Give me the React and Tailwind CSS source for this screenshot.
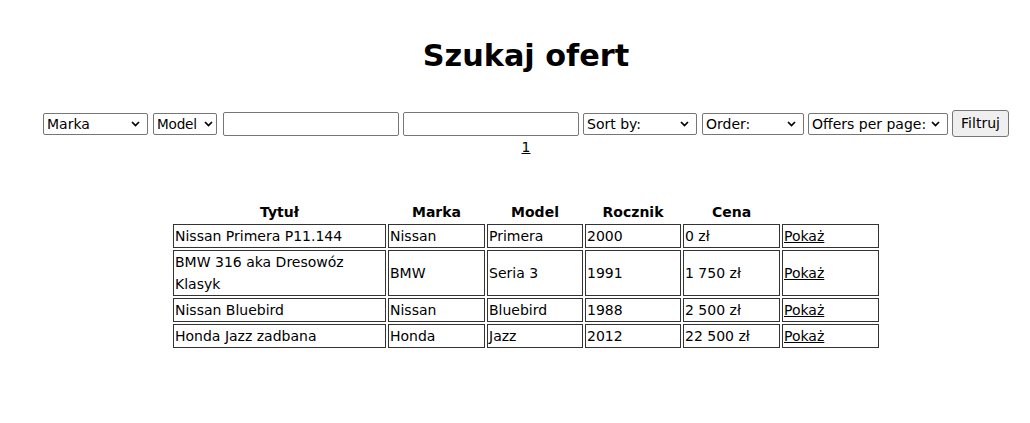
export default function App() {
  const rows = [
    ["Nissan Primera P11.144", "Nissan", "Primera", "2000", "0 zł"],
    ["BMW 316 aka Dresowóz Klasyk", "BMW", "Seria 3", "1991", "1 750 zł"],
    ["Nissan Bluebird", "Nissan", "Bluebird", "1988", "2 500 zł"],
    ["Honda Jazz zadbana", "Honda", "Jazz", "2012", "22 500 zł"],
  ];
  const sel = "h-[22px] border border-[#767676] rounded-[2px] bg-white leading-[20px] text-black pl-[3px] flex items-center justify-between pr-[7px] shrink-0 whitespace-nowrap";
  const Chev = () => (
    <svg width="9" height="6" viewBox="0 0 9 6" className="shrink-0">
      <path d="M1 1 L4.5 4.5 L8 1" fill="none" stroke="#000" strokeWidth="1.7" />
    </svg>
  );
  const widths = ["w-[213px]", "w-[97px]", "w-[96px]", "w-[96px]", "w-[97px]", "w-[97px]"];
  return (
    <div className="min-h-[423px] bg-white text-black pl-[22px] text-center" style={{ fontFamily: '"DejaVu Sans", Verdana, sans-serif' }}>
      <h1 className="text-[30.3px] font-bold pt-[38px] leading-[36px] m-0">Szukaj ofert</h1>
      <div className="flex justify-center items-center mt-[36px]">
        <div className={`${sel} text-[14px] w-[105px]`}><span>Marka</span><Chev /></div>
        <div className="h-[22px] w-[64px] ml-[5px] border border-[#767676] rounded-[2px] bg-white leading-[20px] text-black text-[13.6px] pl-[3px] pr-[3px] flex items-center justify-between shrink-0 whitespace-nowrap tracking-[-0.2px]"><span>Model</span><Chev /></div>
        <div className="w-[176px] h-[24px] ml-[6px] border border-[#767676] rounded-[2px] bg-white shrink-0"></div>
        <div className="w-[176px] h-[24px] ml-[4px] border border-[#767676] rounded-[2px] bg-white shrink-0"></div>
        <div className={`${sel} text-[14px] w-[114px] ml-[4px]`}><span>Sort by:</span><Chev /></div>
        <div className={`${sel} text-[14px] w-[102px] ml-[5px]`}><span>Order:</span><Chev /></div>
        <div className={`${sel} text-[14px] w-[140px] ml-[4px] pr-[4px]`}><span>Offers per page:</span><Chev /></div>
        <button className="h-[27px] w-[57px] ml-[4px] border border-[#767676] rounded-[3px] bg-[#efefef] text-[14px] text-black shrink-0">Filtruj</button>
      </div>
      <div className="text-[14px] leading-[20px]"><a href="#" className="underline text-black">1</a></div>
      <div className="flex justify-center mt-[43px]">
        <table className="border-separate border-spacing-[2px] text-[14px] leading-[22px] text-left">
          <thead>
            <tr>
              {["Tytuł", "Marka", "Model", "Rocznik", "Cena", ""].map((h, i) => (
                <th key={i} className={`${widths[i]} text-center font-bold p-0 leading-[20px]`}>{h}</th>
              ))}
            </tr>
          </thead>
          <tbody>
            {rows.map((r, i) => (
              <tr key={i}>
                {r.map((c, j) => (
                  <td key={j} className={`${widths[j]} border border-[#333] px-[1px] py-0 align-middle`}>{c}</td>
                ))}
                <td className={`${widths[5]} border border-[#333] px-[1px] py-0 align-middle`}><a href="#" className="underline text-black">Pokaż</a></td>
              </tr>
            ))}
          </tbody>
        </table>
      </div>
    </div>
  );
}
